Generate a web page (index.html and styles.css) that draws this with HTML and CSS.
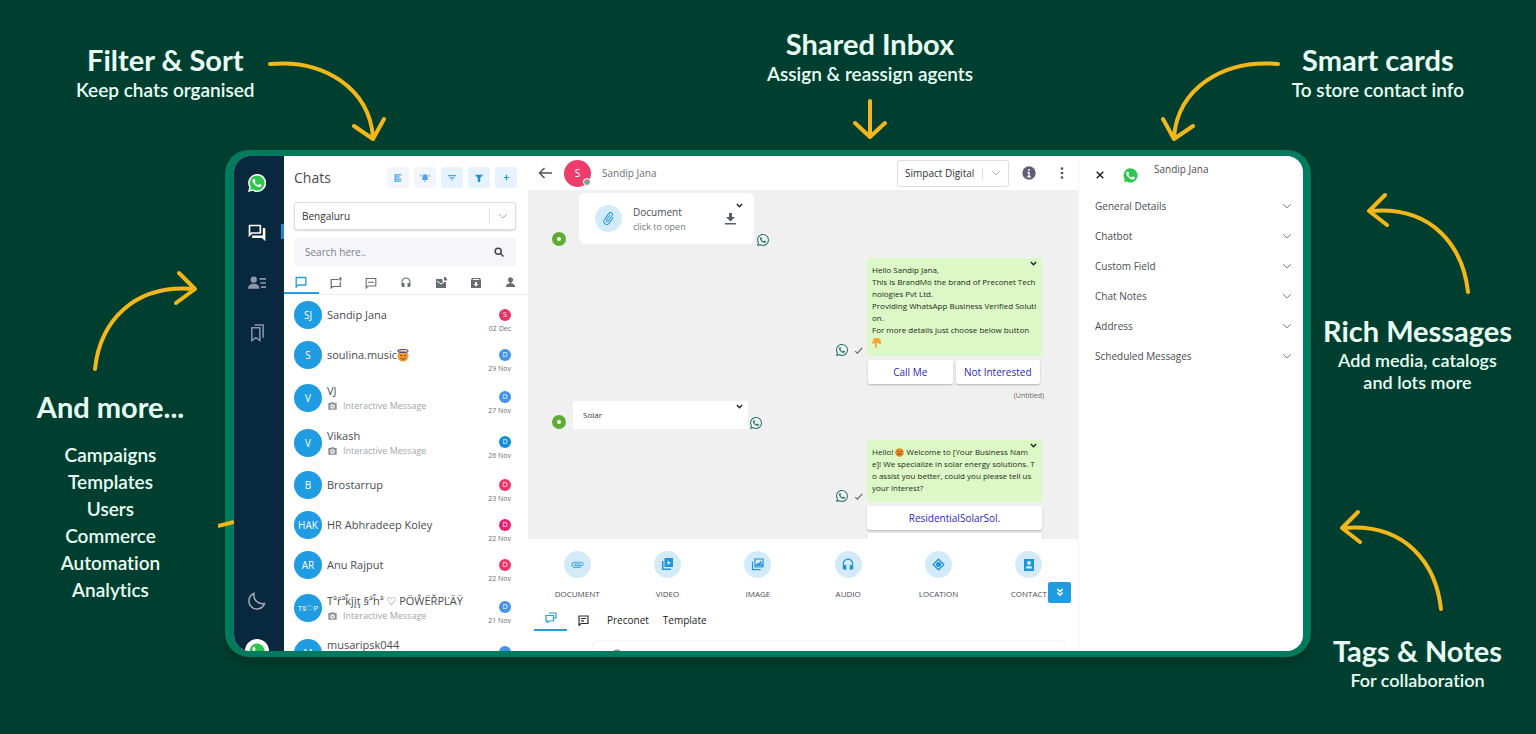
FILE: index.html
```
<!DOCTYPE html>
<html lang="en">
<head>
<meta charset="utf-8">
<title>Team inbox features</title>
<link rel="stylesheet" href="styles.css">
</head>
<body>
<svg class="sprite" aria-hidden="true">
  <symbol id="phone" viewBox="0 0 24 24"><path d="M17.472 14.382c-.297-.149-1.758-.867-2.03-.967-.273-.099-.471-.148-.67.15-.197.297-.767.966-.94 1.164-.173.199-.347.223-.644.075-.297-.15-1.255-.463-2.39-1.475-.883-.788-1.48-1.761-1.653-2.059-.173-.297-.018-.458.13-.606.134-.133.298-.347.446-.52.149-.174.198-.298.298-.497.099-.198.05-.371-.025-.52-.075-.149-.669-1.612-.916-2.207-.242-.579-.487-.5-.669-.51-.173-.008-.371-.01-.57-.01-.198 0-.52.074-.792.372-.272.297-1.04 1.016-1.04 2.479 0 1.462 1.065 2.875 1.213 3.074.149.198 2.096 3.2 5.077 4.487.709.306 1.262.489 1.694.625.712.227 1.36.195 1.871.118.571-.085 1.758-.719 2.006-1.413.248-.694.248-1.289.173-1.413-.074-.124-.272-.198-.57-.347z"/></symbol>
  <symbol id="whatsapp" viewBox="0 0 24 24"><path d="M17.472 14.382c-.297-.149-1.758-.867-2.03-.967-.273-.099-.471-.148-.67.15-.197.297-.767.966-.94 1.164-.173.199-.347.223-.644.075-.297-.15-1.255-.463-2.39-1.475-.883-.788-1.48-1.761-1.653-2.059-.173-.297-.018-.458.13-.606.134-.133.298-.347.446-.52.149-.174.198-.298.298-.497.099-.198.05-.371-.025-.52-.075-.149-.669-1.612-.916-2.207-.242-.579-.487-.5-.669-.51-.173-.008-.371-.01-.57-.01-.198 0-.52.074-.792.372-.272.297-1.04 1.016-1.04 2.479 0 1.462 1.065 2.875 1.213 3.074.149.198 2.096 3.2 5.077 4.487.709.306 1.262.489 1.694.625.712.227 1.36.195 1.871.118.571-.085 1.758-.719 2.006-1.413.248-.694.248-1.289.173-1.413-.074-.124-.272-.198-.57-.347m-5.421 7.403h-.004a9.87 9.87 0 01-5.031-1.378l-.361-.214-3.741.982.998-3.648-.235-.374a9.86 9.86 0 01-1.51-5.26c.001-5.45 4.436-9.884 9.888-9.884 2.64 0 5.122 1.03 6.988 2.898a9.825 9.825 0 012.893 6.994c-.003 5.45-4.437 9.884-9.885 9.884m8.413-18.297A11.815 11.815 0 0012.05 0C5.495 0 .16 5.335.157 11.892c0 2.096.547 4.142 1.588 5.945L.057 24l6.305-1.654a11.882 11.882 0 005.683 1.448h.005c6.554 0 11.89-5.335 11.893-11.893a11.821 11.821 0 00-3.48-8.413Z"/></symbol>
  <symbol id="whatsapp-full" viewBox="0 0 24 24"><path fill="#fff" d="M12 0a12 12 0 1 1-5.7 22.4L0 24l1.7-6.2A12 12 0 0 1 12 0z"/><path fill="#2cc64c" d="M12 1.900a10 10 0 1 1-5.200 18.500L2.900 21.300l1-3.900A10 10 0 0 1 12 1.900z"/><use href="#phone" fill="#fff"/></symbol>
  <symbol id="chevron" viewBox="0 0 12 12"><path fill="none" stroke="currentColor" stroke-width="1.200" d="M1.500 3.800 6 8.300l4.500-4.500"/></symbol>
  <symbol id="caret" viewBox="0 0 12 12"><path fill="none" stroke="currentColor" stroke-width="2.400" d="M1.500 3.500 6 8l4.500-4.500"/></symbol>
  <symbol id="headset" viewBox="0 0 24 24"><path d="M12 1c-4.970 0-9 4.030-9 9v7c0 1.660 1.340 3 3 3h3v-8H5v-2c0-3.870 3.130-7 7-7s7 3.130 7 7v2h-4v8h3c1.660 0 3-1.340 3-3v-7c0-4.970-4.030-9-9-9z"/></symbol>
  <symbol id="clip" viewBox="0 0 24 24"><path d="M16.500 6v11.500c0 2.210-1.790 4-4 4s-4-1.790-4-4V5c0-1.380 1.120-2.500 2.500-2.500s2.500 1.120 2.500 2.500v10.500c0 .55-.45 1-1 1s-1-.45-1-1V6H10v9.500c0 1.380 1.120 2.500 2.500 2.500s2.500-1.120 2.500-2.500V5c0-2.210-1.790-4-4-4S7 2.790 7 5v12.500c0 3.040 2.460 5.500 5.500 5.500s5.500-2.460 5.500-5.500V6z"/></symbol>
  <symbol id="camera" viewBox="0 0 24 24"><path fill-rule="evenodd" d="M2 5h5l1.500-2h7L17 5h5v16H2zm10 2.500a5.500 5.500 0 1 0 0 11 5.500 5.500 0 0 0 0-11zm0 3a2.500 2.500 0 1 1 0 5 2.500 2.500 0 0 1 0-5z"/></symbol>
  <symbol id="check" viewBox="0 0 12 12"><path fill="none" stroke="currentColor" stroke-width="1.500" d="M1.500 6.800 4.500 9.500 11 2.500"/></symbol>
</svg>

<div class="page">
  <header class="top">
    <section class="callout callout-left">
      <div class="caption"><h2>Filter &amp; Sort</h2><p>Keep chats organised</p></div>
      <svg class="arrow" width="120" height="84" viewBox="0 0 120 84"><path d="M3 5C58 0 102 30 106 78M87 67l19 13 11-20"/></svg>
    </section>
    <section class="callout callout-center">
      <div class="caption"><h2>Shared Inbox</h2><p>Assign &amp; reassign agents</p></div>
      <svg class="arrow" width="36" height="42" viewBox="0 0 36 42"><path d="M18 3v36M3 25l15 14 15-14"/></svg>
    </section>
    <section class="callout callout-right">
      <svg class="arrow" width="120" height="84" viewBox="0 0 120 84"><path d="M118 5C62 0 18 30 14 78M3 60l11 20 19-13"/></svg>
      <div class="caption"><h2>Smart cards</h2><p>To store contact info</p></div>
    </section>
  </header>

  <div class="middle">
    <aside class="side side-left">
      <svg class="arrow" width="108" height="106" viewBox="0 0 108 106"><path d="M4 99C9 52 42 14 103 19M88 3l16 16-19 14"/></svg>
      <h2>And more...</h2>
      <ul>
        <li>Campaigns</li><li>Templates</li><li>Users</li><li>Commerce</li><li>Automation</li><li>Analytics</li>
      </ul>
    </aside>

    <div class="frame">
      <svg class="arrow stub" width="16" height="8" viewBox="0 0 16 8"><path d="M0 6 16 2"/></svg>
      <main class="app">
        <nav class="rail" aria-label="Main">
          <a href="#home" aria-label="Home"><svg width="18" height="18"><use href="#whatsapp-full"/></svg></a>
          <a href="#chats" class="current" aria-label="Chats"><svg width="20" height="20" viewBox="0 0 24 24" fill="#fff"><path d="M15 4v7H5.170L4 12.170V4h11m1-2H3c-.55 0-1 .45-1 1v14l4-4h10c.55 0 1-.45 1-1V3c0-.55-.45-1-1-1zm5 4h-2v9H6v2c0 .55.45 1 1 1h11l4 4V7c0-.55-.45-1-1-1z"/></svg></a>
          <a href="#contacts" aria-label="Contacts"><svg width="18" height="16" viewBox="0 0 22 18" fill="#8c95ab"><circle cx="7" cy="5" r="3.800"/><path d="M0 16c0-4 3-6 7-6s7 2 7 6zM14 3h8v2h-8zM15 8h7v2h-7zM16 13h6v2h-6z"/></svg></a>
          <a href="#saved" aria-label="Saved"><svg width="17" height="20" viewBox="0 0 18 20" fill="none" stroke="#8c95ab" stroke-width="1.600"><path d="M3 4.500h8.500V18l-4.200-3L3 18zM6 1.500h9V15"/></svg></a>
          <a href="#theme" class="push" aria-label="Dark mode"><svg width="18" height="18" viewBox="0 0 18 18" fill="none" stroke="#a3aaba" stroke-width="1.500"><path d="M6 1.500C5 7 9 12.500 16.500 11.500A8 8 0 1 1 6 1.500z"/></svg></a>
          <a href="#account" class="account" aria-label="Account"><svg width="18" height="18"><use href="#whatsapp-full"/></svg></a>
        </nav>

        <section class="chats">
          <div class="chats-head">
            <h1>Chats</h1>
            <div class="tools">
              <button aria-label="List"><svg width="8" height="8" viewBox="0 0 10 10" fill="none" stroke="currentColor" stroke-width="1.500"><path d="M2 1h7M2 3.700h5M2 6.300h7M2 9h7M1.500 0v10"/></svg></button>
              <button aria-label="Alerts"><svg width="10" height="9" viewBox="0 0 12 10" fill="currentColor"><path d="M2 8c1-1 1-2 1-4a3 3 0 0 1 6 0c0 2 0 3 1 4zM5 9h2v1H5zM1 1l1 1-1 2H0zM11 1l-1 1 1 2h1z"/></svg></button>
              <button class="tint" aria-label="Sort"><svg width="8" height="8" viewBox="0 0 10 10" stroke="currentColor" stroke-width="1.500"><path d="M0 2h10M2 4.800h6M4 7.500h2"/></svg></button>
              <button class="tint" aria-label="Filter"><svg width="8" height="8" viewBox="0 0 10 10" fill="#1a8fdc"><path d="M0 1h10L6.500 5v5h-3V5z"/></svg></button>
              <button class="tint" aria-label="New chat"><svg width="7" height="7" viewBox="0 0 10 10" stroke="#2a94dd" stroke-width="1.700"><path d="M5 1v8M1 5h8"/></svg></button>
            </div>
          </div>
          <label class="select select-wide">
            <select aria-label="City"><option>Bengaluru</option></select>
            <svg width="10" height="10"><use href="#chevron"/></svg>
          </label>
          <label class="search">
            <input type="text" placeholder="Search here.." aria-label="Search">
            <svg width="10" height="10" viewBox="0 0 10 10" fill="none" stroke="#444" stroke-width="1.500"><circle cx="4.200" cy="4.200" r="3"/><path d="m6.500 6.500 3 3"/></svg>
          </label>
          <div class="tabs">
            <button class="on" aria-label="All"><svg width="12" height="12" viewBox="0 0 12 12" fill="none" stroke="currentColor" stroke-width="1.300"><path d="M1.200 11V1.500h9.600v7.500H3z"/></svg></button>
            <button aria-label="Unread"><svg width="12" height="12" viewBox="0 0 12 12" fill="none" stroke="currentColor" stroke-width="1.200"><path d="M8 2.500H1.200V11L3 9.500h7.300V5M10.300 0v4M8.300 2h4"/></svg></button>
            <button aria-label="Open"><svg width="12" height="12" viewBox="0 0 12 12" fill="none" stroke="currentColor" stroke-width="1.100"><path d="M1.200 11V1.500h9.600v7.500H3zM3 5.300h6" /></svg></button>
            <button aria-label="Support"><svg width="12" height="12" fill="currentColor"><use href="#headset"/></svg></button>
            <button aria-label="Mail"><svg width="12" height="12" viewBox="0 0 12 12" fill="currentColor"><path d="M1 2h6.500v3H11v6H1zM9 0h2v1.500h1v2h-3z"/><path d="m2 4 4 3 3-2" fill="none" stroke="#fff"/></svg></button>
            <button aria-label="Archive"><svg width="12" height="12" viewBox="0 0 12 12" fill="currentColor" fill-rule="evenodd"><path d="M2 1h8l1 2v8H1V3zm1 1-.5 1h7L9 2zm2 3v2H3.500L6 9.500 8.500 7H7V5z"/></svg></button>
            <button aria-label="Agent"><svg width="11" height="11" viewBox="0 0 12 12" fill="currentColor"><circle cx="6" cy="3" r="2.800"/><path d="M5 5h2v2c3 0 4 1.500 4 4H1c0-2.500 1-4 4-4z"/></svg></button>
          </div>
          <ul class="list">
            <li><span class="avatar">SJ</span><div class="who"><b>Sandip Jana</b></div><div class="meta"><i class="red">S</i><time>02 Dec</time></div></li>
            <li><span class="avatar">S</span><div class="who"><b>soulina.music<svg width="12" height="13" viewBox="0 0 12 13"><circle cx="6" cy="7" r="5.500" fill="#f29a2e"/><ellipse cx="6" cy="2" rx="5" ry="1.500" fill="none" stroke="#4a4f9c" stroke-width="1.200"/><path d="M3 6.500h2M7 6.500h2M3.500 9c1.500 1.500 3.500 1.500 5 0" fill="none" stroke="#8a3b12"/></svg></b></div><div class="meta"><i>D</i><time>29 Nov</time></div></li>
            <li class="tall"><span class="avatar">V</span><div class="who"><b>VJ</b><small><svg width="11" height="10"><use href="#camera"/></svg>Interactive Message</small></div><div class="meta"><i>D</i><time>27 Nov</time></div></li>
            <li class="tall"><span class="avatar">V</span><div class="who"><b>Vikash</b><small><svg width="11" height="10"><use href="#camera"/></svg>Interactive Message</small></div><div class="meta"><i class="deep">D</i><time>26 Nov</time></div></li>
            <li><span class="avatar">B</span><div class="who"><b>Brostarrup</b></div><div class="meta"><i class="red">D</i><time>23 Nov</time></div></li>
            <li><span class="avatar">HAK</span><div class="who"><b>HR Abhradeep Koley</b></div><div class="meta"><i class="pink">D</i><time>22 Nov</time></div></li>
            <li><span class="avatar">AR</span><div class="who"><b>Anu Rajput</b></div><div class="meta"><i class="red">D</i><time>22 Nov</time></div></li>
            <li class="tall"><span class="avatar avatar-small">T§♡P</span><div class="who"><b>Tªřªǩĵįţ §ªĥª ♡ PÖŴËŘPĽÄŸ</b><small><svg width="11" height="10"><use href="#camera"/></svg>Interactive Message</small></div><div class="meta"><i>D</i><time>21 Nov</time></div></li>
            <li class="tall"><span class="avatar">M</span><div class="who"><b>musaripsk044</b></div><div class="meta"><i></i></div></li>
          </ul>
        </section>

        <section class="thread">
          <header class="thread-head">
            <button class="plain" aria-label="Back"><svg width="14" height="12" viewBox="0 0 14 12" fill="none" stroke="#4d4f55" stroke-width="1.400"><path d="M14 6H1.500M6.500 1l-5 5 5 5"/></svg></button>
            <span class="person">S</span>
            <span class="person-name">Sandip Jana</span>
            <label class="select select-agent">
              <select aria-label="Agent"><option>Simpact Digital</option></select>
              <svg width="10" height="10"><use href="#chevron"/></svg>
            </label>
            <button class="plain" aria-label="Info"><svg width="14" height="14" viewBox="0 0 14 14"><circle cx="7" cy="7" r="6.700" fill="#5f6075"/><path d="M7 3v2M7 6v5M5.500 6.500H7M5.300 10.700h3.400" stroke="#fff" stroke-width="1.400"/></svg></button>
            <button class="plain" aria-label="More"><svg width="4" height="12" viewBox="0 0 4 12" fill="#4b4d5c"><circle cx="2" cy="1.500" r="1.300"/><circle cx="2" cy="6" r="1.300"/><circle cx="2" cy="10.500" r="1.300"/></svg></button>
          </header>

          <div class="messages">
            <div class="row in first">
              <span class="dot"></span>
              <article class="doc">
                <span class="round"><svg width="15" height="15" class="tilt"><use href="#clip"/></svg></span>
                <p><b>Document</b><span>click to open</span></p>
                <svg width="11" height="12" viewBox="0 0 11 12" fill="#5b5c6a"><path d="M4 0h3v4h3L5.500 8.500 1 4h3zM0 10h11v1.500H0z"/></svg>
                <svg class="caret" width="7" height="7"><use href="#caret"/></svg>
              </article>
              <svg class="wa" width="12" height="12"><use href="#whatsapp"/></svg>
            </div>

            <div class="row out">
              <span class="sent"><svg class="wa" width="12" height="12"><use href="#whatsapp"/></svg><svg width="9" height="9"><use href="#check"/></svg></span>
              <article class="bubble">
                Hello Sandip Jana,<br>This is BrandMo the brand of Preconet Tech<br>nologies Pvt Ltd.<br>Providing WhatsApp Business Verified Soluti<br>on.<br>For more details just choose below button<br>
                <svg width="9" height="10" viewBox="0 0 9 10" fill="#f6a834"><path d="M2 0h5l2 3v3H7L6 4.500H5L4.500 10H3L3 5 1.500 6 0 5z"/></svg>
                <svg class="caret" width="7" height="7"><use href="#caret"/></svg>
              </article>
            </div>
            <div class="replies pair"><button>Call Me</button><button>Not Interested</button></div>
            <p class="untitled">(Untitled)</p>

            <div class="row in">
              <span class="dot"></span>
              <article class="text">Solar<svg class="caret" width="7" height="7"><use href="#caret"/></svg></article>
              <svg class="wa" width="12" height="12"><use href="#whatsapp"/></svg>
            </div>

            <div class="row out last">
              <span class="sent"><svg class="wa" width="12" height="12"><use href="#whatsapp"/></svg><svg width="9" height="9"><use href="#check"/></svg></span>
              <article class="bubble">
                Hello! <svg width="9" height="9" viewBox="0 0 9 9"><circle cx="4.500" cy="4.500" r="4.300" fill="#ec8a22"/><path d="M2 3.500h1.500M5.500 3.500H7M2.500 6h4" stroke="#7c3b10"/></svg> Welcome to [Your Business Nam<br>e]! We specialize in solar energy solutions. T<br>o assist you better, could you please tell us<br>your interest?
                <svg class="caret" width="7" height="7"><use href="#caret"/></svg>
              </article>
            </div>
            <div class="replies"><button>ResidentialSolarSol.</button><button aria-label="Next option"></button></div>
          </div>

          <footer class="composer">
            <div class="attach">
              <button><span class="round"><svg width="13" height="13" class="turn"><use href="#clip"/></svg></span>DOCUMENT</button>
              <button><span class="round"><svg width="13" height="13" viewBox="0 0 13 13"><path fill-rule="evenodd" d="M3.500 0H12v9H3.500zm3 2.500v4.500l3.500-2.200zM1 3h1.500v7.500H10V12H1z"/></svg></span>VIDEO</button>
              <button><span class="round"><svg width="13" height="13" viewBox="0 0 13 13" fill="none" stroke="currentColor" stroke-width="1.200"><path d="M4 1h8v8H4zM1.500 3.500v8.200h8.200M5 7.500l2-2 1.200 1 1.300-2.500 1.500 3.500z"/></svg></span>IMAGE</button>
              <button><span class="round"><svg width="14" height="14"><use href="#headset"/></svg></span>AUDIO</button>
              <button><span class="round"><svg width="13" height="13" viewBox="0 0 13 13"><path fill="none" stroke="currentColor" stroke-width="1.300" d="M6.500 1.200 11.800 6.500 6.500 11.800 1.200 6.500z"/><circle cx="6.500" cy="6.500" r="2.500"/></svg></span>LOCATION</button>
              <button><span class="round"><svg width="12" height="12" viewBox="0 0 12 12"><path fill-rule="evenodd" d="M1 0h10v12H1zm5 2a2 2 0 1 0 0 4 2 2 0 0 0 0-4zM2.500 9.500h7C9.500 7.500 7.500 7 6 7s-3.500.5-3.500 2.500z"/></svg></span>CONTACT</button>
              <button class="collapse" aria-label="Collapse"><svg width="8" height="9" viewBox="0 0 9 10" fill="none" stroke="#fff" stroke-width="1.800"><path d="m1.500 1 3 3 3-3M1.500 5l3 3 3-3"/></svg></button>
            </div>
            <div class="modes">
              <button class="on" aria-label="Messages"><svg width="12" height="11" viewBox="0 0 12 11" fill="none" stroke="currentColor" stroke-width="1.200"><path d="M3.500 1h7.500v5H9M1 3.500h7.500V9H4L2 10.500V9H1z"/></svg></button>
              <button aria-label="Quick replies"><svg width="11" height="11" viewBox="0 0 11 11" fill="none" stroke="#333" stroke-width="1.200"><path d="M1 10.500V1h9v7.500H3zM3 3.500h5M3 5.800h3"/></svg></button>
              <button>Preconet</button>
              <button>Template</button>
            </div>
            <div class="entry"><svg width="12" height="12" viewBox="0 0 12 12" fill="none" stroke="#666"><circle cx="6" cy="6" r="5"/></svg><input type="text" aria-label="Message"></div>
          </footer>
        </section>

        <section class="details">
          <div class="details-head">
            <button class="plain" aria-label="Close"><svg width="8" height="8" viewBox="0 0 8 8" stroke="#222" stroke-width="1.500"><path d="m.7.7 6.600 6.600M7.300.7.700 7.300"/></svg></button>
            <svg width="17" height="17"><use href="#whatsapp-full"/></svg>
            <span>Sandip Jana</span>
          </div>
          <button class="fold">General Details<svg width="10" height="10"><use href="#chevron"/></svg></button>
          <button class="fold">Chatbot<svg width="10" height="10"><use href="#chevron"/></svg></button>
          <button class="fold">Custom Field<svg width="10" height="10"><use href="#chevron"/></svg></button>
          <button class="fold">Chat Notes<svg width="10" height="10"><use href="#chevron"/></svg></button>
          <button class="fold">Address<svg width="10" height="10"><use href="#chevron"/></svg></button>
          <button class="fold">Scheduled Messages<svg width="10" height="10"><use href="#chevron"/></svg></button>
        </section>
      </main>
    </div>

    <aside class="side side-right">
      <section>
        <svg class="arrow" width="106" height="104" viewBox="0 0 106 104"><path d="M103 100C98 55 68 14 6 19M20 3 4 19l18 14"/></svg>
        <h2>Rich Messages</h2>
        <p>Add media, catalogs<br>and lots more</p>
      </section>
      <section>
        <svg class="arrow arrow-low" width="106" height="104" viewBox="0 0 106 104"><path d="M103 100C98 55 68 14 6 19M20 3 4 19l18 14"/></svg>
        <h2>Tags &amp; Notes</h2>
        <p>For collaboration</p>
      </section>
    </aside>
  </div>
</div>
</body>
</html>
```
FILE: styles.css
```
* { box-sizing: border-box; }
body, h1, h2, p, ul { margin: 0; padding: 0; }
ul { list-style: none; }
body {
  background: #003f2f;
  color: #e9fff6;
  font-family: Lato, "Liberation Sans", sans-serif;
  font-variant-ligatures: none;
}
button, input, select { font: inherit; color: inherit; border: 0; padding: 0; margin: 0; background: none; }
svg { display: block; flex: none; }
.sprite { position: absolute; width: 0; height: 0; }
.page { min-height: 100vh; overflow: hidden; }

/* captions */
h2 { font-size: 29px; line-height: 36px; font-weight: 700; white-space: nowrap; }
.caption, .side { text-align: center; }
.caption p { font-size: 19px; line-height: 24px; font-weight: 600; white-space: nowrap; }
.arrow { fill: none; stroke: #f4b71a; stroke-width: 4; stroke-linecap: round; stroke-linejoin: round; }
.top { display: grid; grid-template-columns: 640fr 460fr 436fr; height: 150px; }
.callout { display: flex; gap: 12px; }
.callout-left { padding: 42px 0 0 76px; }
.callout-right { padding: 42px 72px 0 0; justify-content: flex-end; }
.callout-left .arrow, .callout-right .arrow { margin-top: 17px; }
.callout-center { flex-direction: column; align-items: center; padding-top: 26px; }

.middle { display: grid; grid-template-columns: 225px minmax(0, 1fr) 225px; }
.side { display: flex; flex-direction: column; align-items: center; }
.side-left { padding: 120px 4px 0 0; }
.side-left .arrow { margin: 0 0 13px 68px; align-self: center; }
.side-left ul { margin-top: 16px; font-size: 19px; line-height: 27px; font-weight: 600; }
.side-right { padding: 42px 12px 0 0; gap: 116px; }
.side-right section { display: flex; flex-direction: column; align-items: center; }
.side-right p { font-size: 18px; line-height: 22px; font-weight: 600; }
.side-right .arrow { margin-bottom: 17px; }
.side-right .arrow-low { margin-right: 54px; margin-bottom: 20px; }

/* device frame */
.frame {
  position: relative;
  height: calc(100vh - 227px);
  border: solid #027a5e;
  border-width: 6px 8px 6px 9px;
  border-radius: 24px;
  background: #027a5e;
  box-shadow: 0 8px 8px rgba(0, 30, 22, .3);
}
.stub { position: absolute; left: -16px; top: 364px; stroke-linecap: butt; }
.app {
  display: grid;
  grid-template-columns: 50px 244px minmax(0, 1fr) 224px;
  height: 100%;
  overflow: hidden;
  border-radius: 16px;
  background: #fff;
  color: #4a4c52;
  font-family: "Open Sans", "Noto Sans", "DejaVu Sans", sans-serif;
  font-size: 10px;
}

.rail { background: #08293d; display: flex; flex-direction: column; gap: 26px; padding: 15px 4px 0 0; min-height: 0; }
.rail a { height: 24px; display: flex; align-items: center; justify-content: center; flex: none; position: relative; }
.rail .current::after { content: ""; position: absolute; right: -4px; top: 3px; width: 3px; height: 15px; background: #2387c9; }
.rail .push { margin-top: auto; }
.rail .account { width: 24px; align-self: center; background: #fff; border-radius: 50%; margin-bottom: -12px; }

/* chat list */
.chats { min-height: 0; overflow: hidden; }
.chats-head { display: flex; justify-content: space-between; align-items: center; padding: 11px 11px 0 10px; height: 32px; }
h1 { font-size: 14px; font-weight: 400; }
.tools { display: flex; gap: 5px; }
.tools button { width: 22px; height: 21px; border-radius: 3px; background: #f2f5fc; color: #4da3e6; display: flex; align-items: center; justify-content: center; }
.tools .tint { background: #e6f3fd; }
.select { display: flex; align-items: center; position: relative; border: 1px solid #ddd; border-radius: 3px; background: #fff; color: #333; height: 28px; }
.select select { appearance: none; flex: 1; min-width: 0; height: 100%; padding-left: 7px; outline: 0; }
.select svg { color: #aaa; margin: 0 7px; pointer-events: none; }
.select::after { content: ""; position: absolute; right: 25px; top: 6px; bottom: 6px; width: 1px; background: #ddd; }
.select-wide { margin: 14px 12px 0 10px; box-shadow: 0 1px 2px rgba(0, 0, 0, .15); }
.search { display: flex; align-items: center; margin: 8px 12px 0 10px; height: 28px; padding: 0 12px 0 11px; background: #f5f5fa; border-radius: 4px; }
.search input { flex: 1; min-width: 0; outline: 0; }
.search input::placeholder { color: #7d7f87; }
.tabs { display: grid; grid-template-columns: repeat(7, 1fr); height: 29px; border-bottom: 1px solid #eee; color: #6a6c74; }
.tabs button { display: flex; align-items: center; justify-content: center; padding-top: 5px; }
.tabs .on { color: #2a9bdc; border-bottom: 2px solid #2a9bdc; }
.list li { display: flex; align-items: center; gap: 5px; height: 40px; padding: 0 17px 0 10px; }
.list .tall { height: 45px; }
.avatar { width: 28px; height: 28px; border-radius: 50%; background: #1f9ce2; color: #fff; display: flex; align-items: center; justify-content: center; font-size: 10px; flex: none; }
.avatar-small { font-size: 8px; }
.who { flex: 1; min-width: 0; white-space: nowrap; }
.who b { display: flex; align-items: center; font-weight: 400; font-size: 11px; line-height: 16px; }
.list .tall:last-child { align-items: flex-start; }
.list .tall:last-child .avatar { margin-top: 9px; }
.list .tall:last-child .who { padding-top: 7px; }
.who small { display: flex; align-items: center; gap: 5px; color: #a3a5aa; font-size: 9px; line-height: 14px; }
.who small svg { fill: #8e9095; }
.meta { display: flex; flex-direction: column; align-items: flex-end; gap: 3px; padding-top: 12px; }
.list .tall:last-child .meta { padding-top: 16px; }
.meta i { width: 12px; height: 12px; border-radius: 50%; background: #4394e8; color: #fff; font-style: normal; font-size: 7px; line-height: 12px; text-align: center; }
.meta .red { background: #ea3565; }
.meta .pink { background: #e8206f; }
.meta .deep { background: #128cd6; }
.meta time { font-size: 7px; line-height: 10px; color: #6b6d73; white-space: nowrap; }

/* conversation */
.thread { display: flex; flex-direction: column; min-height: 0; min-width: 0; border-right: 1px solid #f4f4f4; }
.thread-head { display: flex; align-items: center; height: 34px; padding: 0 14px 0 10px; flex: none; }
.plain { display: flex; }
.person { width: 27px; height: 27px; margin-left: 12px; border-radius: 50%; background: #ee3d6c; color: #fff; display: flex; align-items: center; justify-content: center; position: relative; }
.person::after { content: ""; position: absolute; right: 0; bottom: 1px; width: 6px; height: 6px; border: 1px solid #fff; border-radius: 50%; background: #8f9a8f; }
.person-name { margin: 0 auto 0 11px; color: #6e7076; }
.select-agent { width: 112px; margin-right: 13px; height: 27px; }
.select-agent + .plain { margin-right: 24px; }
.messages { flex: 1; min-height: 0; overflow: hidden; background: #f0f0f0; padding-top: 3px; }
.row { display: flex; align-items: flex-end; }
.in { padding-left: 24px; }
.first { height: 53px; }
.dot { width: 14px; height: 14px; border-radius: 50%; border: 5px solid #5fab34; background: #fff; margin-right: 7px; flex: none; }
.doc { position: relative; display: flex; align-items: center; align-self: flex-start; width: 175px; height: 51px; margin: 0 3px 0 6px; padding: 0 18px 0 16px; border-radius: 6px; background: #fff; }
.round { width: 27px; height: 27px; border-radius: 50%; background: #d3ebf9; color: #1f93d8; fill: currentColor; display: flex; align-items: center; justify-content: center; flex: none; }
.tilt { transform: rotate(35deg); }
.turn { transform: rotate(90deg); }
.doc p { margin: 0 auto 0 11px; }
.doc b { display: block; font-weight: 400; line-height: 16px; }
.doc p span { display: block; font-size: 9px; line-height: 14px; color: #77797f; }
.caret { position: absolute; right: 5px; top: 2px; color: #222; }
.doc .caret { right: 11px; top: 9px; }
.wa { fill: #1d7560; }
.out { justify-content: flex-end; padding-right: 36px; margin-top: 12px; }
.sent { display: flex; align-items: center; gap: 6px; margin-right: 4px; color: #666; }
.bubble { position: relative; width: 175px; padding: 6px 0 8px 5px; background: #dbf8c6; color: #1d2b19; font-size: 8px; line-height: 12px; white-space: nowrap; }
.bubble svg:not(.caret) { display: inline-block; vertical-align: middle; }
.replies { width: 175px; margin: 4px 36px 0 auto; display: grid; gap: 3px; }
.replies button { height: 24px; background: #fff; border-radius: 2px; color: #2a1fc4; box-shadow: 0 1px 2px rgba(0, 0, 0, .25); }
.pair { grid-template-columns: 1fr 1fr; padding: 0 2px 0 1px; }
.untitled { text-align: right; margin: 6px 34px 0 0; font-size: 7px; line-height: 11px; color: #666; }
.text { position: relative; width: 175px; height: 28px; padding-left: 10px; margin-right: 2px; background: #fff; font-size: 8px; line-height: 28px; color: #333; }
.last { margin-top: 11px; }

.composer { flex: none; height: 112px; overflow: hidden; background: #fff; }
.attach { position: relative; display: grid; grid-template-columns: repeat(6, 1fr); padding: 12px 4px 0; }
.attach button { display: flex; flex-direction: column; align-items: center; gap: 10px; font-size: 8px; line-height: 12px; }
.attach .collapse { position: absolute; right: 7px; bottom: -3px; width: 23px; height: 21px; border-radius: 2px; background: #1f9ce2; justify-content: center; }
.modes { display: flex; align-items: center; height: 30px; margin: 5px 0 0 6px; color: #222; }
.modes button { padding-right: 14px; height: 30px; }
.modes button:nth-child(2) { padding: 0 18px 0 11px; }
.modes .on { width: 33px; height: 23px; margin-top: -1px; padding: 0 0 3px 11px; color: #2a9bdc; border-bottom: 2px solid #2a9bdc; }
.entry { display: flex; gap: 8px; margin: 5px 12px 0 64px; padding: 8px 18px; height: 30px; border: 1px solid #f4f4f4; border-radius: 6px; }
.entry input { flex: 1; outline: 0; min-width: 0; }

/* contact card */
.details { padding: 0 11px 0 16px; }
.details-head { display: flex; align-items: center; height: 35px; padding-top: 3px; }
.details-head .plain { margin: 0 18px 0 1px; }
.details-head span { margin: -13px 0 0 15px; }
.fold { display: flex; width: 100%; align-items: center; justify-content: space-between; height: 30px; text-align: left; }
.fold svg { color: #777; }
```
